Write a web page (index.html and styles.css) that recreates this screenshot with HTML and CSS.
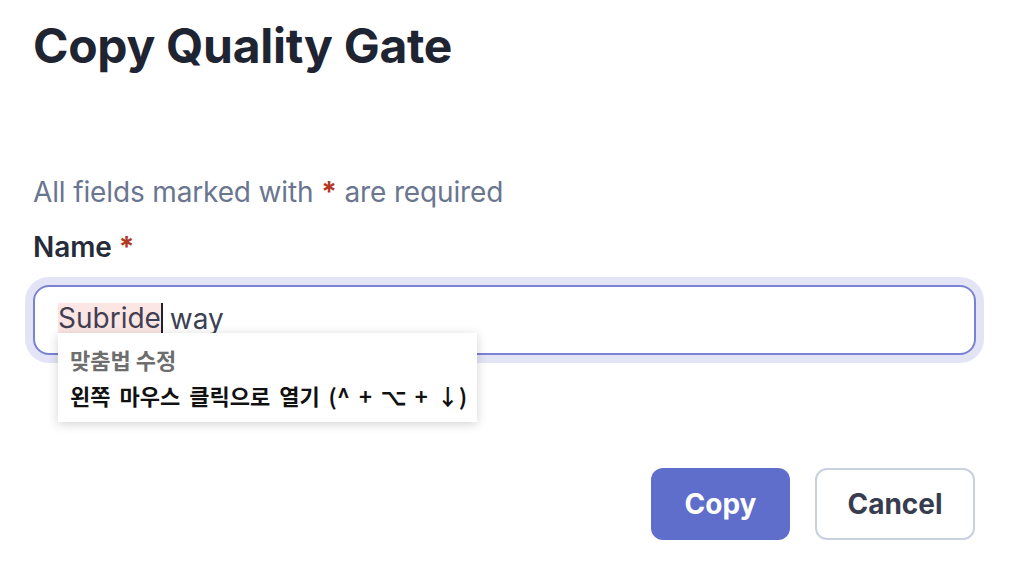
FILE: index.html
```html
<!DOCTYPE html>
<html>
<head>
<meta charset="utf-8">
<link rel="stylesheet" href="styles.css">
</head>
<body>
<div class="dialog">
  <h1 class="title">Copy Quality Gate</h1>
  <p class="hint">All fields marked with <span class="req">*</span> are required</p>
  <label class="label">Name <span class="req">*</span></label>
  <div class="field">
    <div class="ring">
      <div class="input"><span class="misspelt">Subride</span><span class="caret"></span> way</div>
    </div>
    <div class="tooltip">
      <div class="tip-title">맞춤법 수정</div>
      <div class="tip-body">왼쪽 마우스 클릭으로 열기 (^ + ⌥ + ↓)</div>
    </div>
  </div>
  <div class="actions">
    <button class="btn primary">Copy</button>
    <button class="btn secondary">Cancel</button>
  </div>
</div>
</body>
</html>
```

FILE: styles.css
```css
html, body {
  margin: 0;
  padding: 0;
  background: #ffffff;
}
body {
  font-family: Inter, "Noto Sans", sans-serif;
  width: 1030px;
  height: 584px;
  overflow: hidden;
}
.dialog {
  padding: 0 55px 0 33px;
  display: flex;
  flex-direction: column;
}
.title {
  margin: 18px 0 0 0;
  font-size: 48px;
  line-height: 56px;
  font-weight: 700;
  color: #1f2433;
  letter-spacing: -0.3px;
}
.hint {
  margin: 101px 0 0 0;
  font-size: 28px;
  line-height: 34px;
  color: #6a7590;
  letter-spacing: -0.14px;
}
.req {
  color: #b3361f;
  font-weight: 700;
}
.label {
  margin-top: 21px;
  font-size: 28px;
  line-height: 34px;
  font-weight: 600;
  color: #262b3a;
  letter-spacing: -0.1px;
}
.field {
  position: relative;
  margin-top: 13px;
}
.ring {
  margin-left: -8px;
  margin-right: -9px;
  padding: 8px;
  border-radius: 24px;
  background: #e3e5f6;
}
.input {
  height: 63px;
  border: 2px solid #7a82d6;
  border-radius: 16px;
  background: #ffffff;
  padding: 0 23px 3px 23px;
  box-sizing: content-box;
  display: flex;
  align-items: center;
  font-size: 28px;
  color: #3b4154;
  white-space: pre;
  word-spacing: -2px;
}
.misspelt {
  background: #fce6e4;
  line-height: 31px;
  color: #433f52;
}
.caret {
  display: inline-block;
  width: 2px;
  height: 31px;
  background: #1e2230;
  margin-right: 1px;
}
.tooltip {
  position: absolute;
  left: 25px;
  top: 56px;
  width: 419px;
  height: 89px;
  box-sizing: border-box;
  background: #ffffff;
  box-shadow: 0 2px 10px rgba(0, 0, 0, 0.18);
  padding: 8px 12px 0 12px;
  font-family: "Noto Sans CJK KR", "Noto Sans", sans-serif;
  font-size: 22px;
  font-weight: 700;
  white-space: nowrap;
}
.tip-title {
  color: #6e6e6e;
  line-height: 36px;
}
.tip-body {
  color: #111111;
  line-height: 36px;
  word-spacing: 4px;
}
.actions {
  display: flex;
  justify-content: flex-end;
  gap: 25px;
  margin-top: 105px;
}
.btn {
  height: 72px;
  border-radius: 12px;
  font-family: Inter, "Noto Sans", sans-serif;
  font-size: 28px;
  font-weight: 700;
  padding: 0;
  cursor: pointer;
}
.primary {
  width: 139px;
  background: #5f6dcb;
  color: #ffffff;
  border: none;
}
.secondary {
  width: 160px;
  background: #ffffff;
  color: #373c4f;
  border: 2px solid #c9d0e0;
}
```
